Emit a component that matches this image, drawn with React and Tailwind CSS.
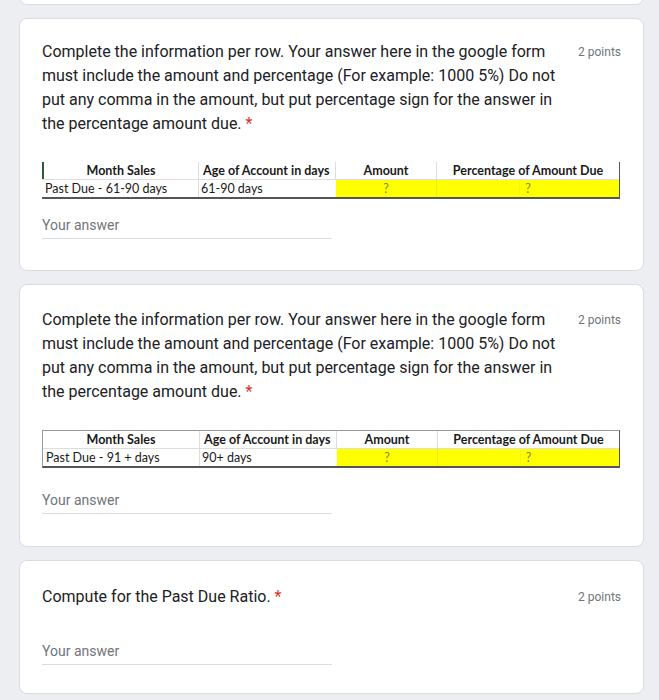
import React from "react";

const QUESTION =
  "Complete the information per row. Your answer here in the google form must include the amount and percentage (For example: 1000 5%) Do not put any comma in the amount, but put percentage sign for the answer in the percentage amount due.";

function Title({ text }) {
  return (
    <div className="flex items-start gap-[10px]">
      <div className="flex-1 min-w-0 text-[16px] leading-6 text-[#202124]">
        {text}
        <span className="text-[#d93025]"> *</span>
      </div>
      <div className="w-[47px] shrink-0 pt-[4px] text-right text-[12px] leading-4 text-[#70757a] whitespace-nowrap">
        2 points
      </div>
    </div>
  );
}

function AnswerInput() {
  return (
    <div className="w-[290px] border-b border-[#dadce0] pb-[3px] text-[14px] leading-5 text-[#70757a]">
      Your answer
    </div>
  );
}

function SalesTable({ label, age, boxed }) {
  return (
    <div
      className={`w-[578px] text-[12.5px] leading-[17px] text-[#1a1a1a] [font-family:Lato,'Liberation_Sans',sans-serif] border-r-[1.5px] border-r-[#555] border-b-2 border-b-[#555] ${
        boxed ? "border-t border-t-[#999] border-l border-l-[#999]" : ""
      }`}
    >
      <div className="flex font-bold">
        <div className={`w-[157px] text-center border-r border-[#ddd] ${boxed ? "" : "border-l-2 border-l-[#2d5a3a]"}`}>
          Month Sales
        </div>
        <div className="w-[137px] pl-[4px] border-r border-[#ddd] whitespace-nowrap">Age of Account in days</div>
        <div className="w-[101px] text-center border-r border-[#ddd]">Amount</div>
        <div className="flex-1 text-center">Percentage of Amount Due</div>
      </div>
      <div className="flex border-t border-[#ddd]">
        <div className="w-[157px] pl-[3px] border-r border-[#ddd]">{label}</div>
        <div className="w-[137px] pl-[2px]">{age}</div>
        <div className="w-[101px] text-center bg-[#ffff00] text-[#85850f] border-r border-[#eaea20]">?</div>
        <div className="relative flex-1 text-center bg-[#ffff00] text-[#85850f]">
          ?
          <div className="absolute left-[82px] top-0 bottom-0 w-px bg-[#f2f230]"></div>
        </div>
      </div>
    </div>
  );
}

export default function App() {
  return (
    <div className="min-h-[700px] bg-[#eceef1] pl-[19px] pr-[15px] [font-family:Roboto,'Liberation_Sans',sans-serif] overflow-hidden">
      <div className="flex flex-col gap-[13px] -mt-[20px] pb-6">
        {/* previous card (cut off) */}
        <div className="h-[25px] bg-white rounded-lg border border-[#dadce0]"></div>

        <div className="bg-white rounded-lg border border-[#dadce0] px-[22px] pt-[21px] pb-[31px]">
          <Title text={QUESTION} />
          <div className="mt-[26px]">
            <SalesTable label="Past Due - 61-90 days" age="61-90 days" />
          </div>
          <div className="mt-[16px]">
            <AnswerInput />
          </div>
        </div>

        <div className="bg-white rounded-lg border border-[#dadce0] px-[22px] pt-[23px] pb-[32px]">
          <Title text={QUESTION} />
          <div className="mt-[26px]">
            <SalesTable label="Past Due - 91 + days" age="90+ days" boxed />
          </div>
          <div className="mt-[22px]">
            <AnswerInput />
          </div>
        </div>

        <div className="bg-white rounded-lg border border-[#dadce0] px-[22px] pt-[24px] pb-[28px]">
          <Title text="Compute for the Past Due Ratio." />
          <div className="mt-[32px]">
            <AnswerInput />
          </div>
        </div>
      </div>
    </div>
  );
}
